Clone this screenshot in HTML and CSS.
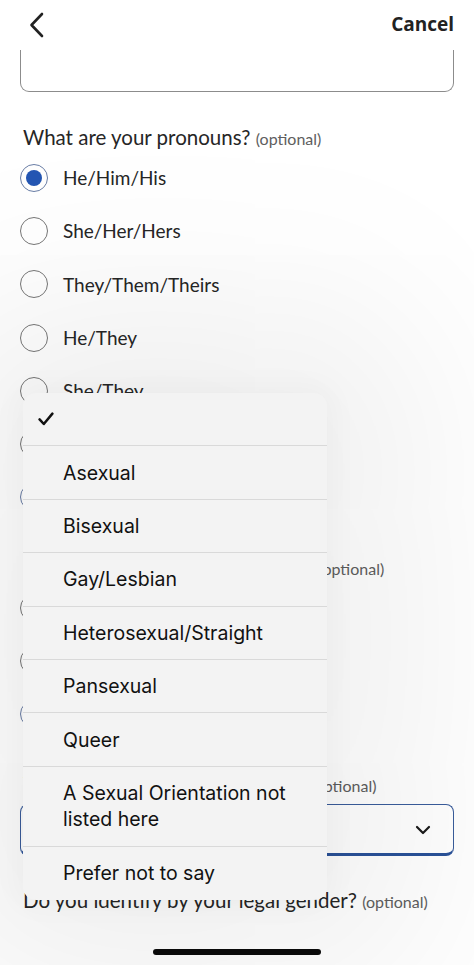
FILE: index.html
```html
<!DOCTYPE html>
<html>
<head>
<meta charset="utf-8">
<link rel="stylesheet" href="styles.css">
</head>
<body>
<div class="screen">
  <header class="topbar">
    <svg class="back" width="16" height="26" viewBox="0 0 16 26"><path d="M13 2 L2.5 13 L13 24" fill="none" stroke="#222" stroke-width="2.6" stroke-linecap="round" stroke-linejoin="round"/></svg>
    <span class="cancel">Cancel</span>
  </header>
  <main class="content">
    <div class="textbox"></div>

    <p class="question q1">What are your pronouns? <span class="opt">(optional)</span></p>
    <ul class="radios">
      <li class="radio checked"><span class="circle"></span>He/Him/His</li>
      <li class="radio"><span class="circle"></span>She/Her/Hers</li>
      <li class="radio"><span class="circle"></span>They/Them/Theirs</li>
      <li class="radio"><span class="circle"></span>He/They</li>
      <li class="radio"><span class="circle"></span>She/They</li>
      <li class="radio"><span class="circle"></span></li>
      <li class="radio checked"><span class="circle"></span></li>
    </ul>

    <p class="question q2">Do you identify as transgender?&nbsp; <span class="opt">(optional)</span></p>
    <ul class="radios">
      <li class="radio"><span class="circle"></span></li>
      <li class="radio"><span class="circle"></span></li>
      <li class="radio checked"><span class="circle"></span></li>
    </ul>

    <p class="question q3">What's your sexual orientation? <span class="opt">(optional)</span></p>
    <div class="select">
      <svg class="chev" width="16" height="10" viewBox="0 0 16 10"><path d="M2 2 L8 8 L14 2" fill="none" stroke="#1b1b1b" stroke-width="2.2" stroke-linecap="round" stroke-linejoin="round"/></svg>
    </div>

    <p class="question q4">Do you identify by your legal gender? <span class="opt">(optional)</span></p>
  </main>

  <div class="menu">
    <div class="item check-row">
      <svg width="16" height="14" viewBox="0 0 16 14"><path d="M1.6 7.4 L5.8 12 L14.4 1.6" fill="none" stroke="#111" stroke-width="2.5" stroke-linecap="round" stroke-linejoin="round"/></svg>
    </div>
    <div class="item">Asexual</div>
    <div class="item">Bisexual</div>
    <div class="item">Gay/Lesbian</div>
    <div class="item">Heterosexual/Straight</div>
    <div class="item">Pansexual</div>
    <div class="item">Queer</div>
    <div class="item two">A Sexual Orientation not listed here</div>
    <div class="item last">Prefer not to say</div>
  </div>

  <div class="home"></div>
</div>
</body>
</html>
```

FILE: styles.css
```css
* { box-sizing: border-box; }
html, body { margin: 0; padding: 0; background: #fff; }
.screen {
  position: relative;
  width: 474px;
  height: 965px;
  overflow: hidden;
  background: #fff;
  font-family: "Lato", "Noto Sans", sans-serif;
  color: #262626;
}
.topbar {
  height: 48px;
  display: flex;
  align-items: center;
  justify-content: space-between;
  padding: 0 20px 0 29px;
}
.back { display: block; margin-top: 2px; }
.cancel {
  font-family: "Open Sans", sans-serif;
  font-weight: 700;
  font-size: 19px;
  color: #222;
}
.content { padding: 0 20px; }
.textbox {
  height: 42px;
  margin-top: 2px;
  border: 1.5px solid #8c8c8c;
  border-top: none;
  border-radius: 0 0 9px 9px;
}
.question {
  margin: 0;
  font-size: 20.5px;
  line-height: 24px;
  padding-left: 3px;
  color: #262626;
}
.q1 { margin-top: 33px; }
.opt { font-size: 16px; color: #5e5e5e; }
.radios {
  list-style: none;
  margin: 0;
  padding: 0;
}
.radio {
  height: 53.3px;
  display: flex;
  align-items: center;
  gap: 15px;
  font-size: 19px;
  color: #262626;
}
.circle {
  width: 28px;
  height: 28px;
  border-radius: 50%;
  border: 1.5px solid #777;
  flex: none;
  display: flex;
  align-items: center;
  justify-content: center;
}
.radio.checked .circle::after {
  content: "";
  width: 16px;
  height: 16px;
  border-radius: 50%;
  background: #2456b3;
}
.radio.checked .circle { border-color: #6a7ea6; }
.q2 { margin-top: 31px; }
.q3 { margin-top: 31px; }
.select {
  height: 52px;
  margin-top: 6px;
  border: 1.5px solid #3a5d9c;
  border-bottom: 3.5px solid #2a5299;
  border-radius: 8px;
  display: flex;
  align-items: center;
  justify-content: flex-end;
  padding-right: 22px;
}
.chev { display: block; margin-top: 2px; }
.q4 { margin-top: 32px; }

.menu {
  position: absolute;
  left: 23px;
  top: 393px;
  width: 304px;
  background: #f3f3f3;
  border-radius: 13px;
  overflow: hidden;
  box-shadow: 0 0 200px 90px rgba(0, 0, 0, 0.065), 0 0 30px 6px rgba(0, 0, 0, 0.03);
  font-family: "Inter", "Liberation Sans", sans-serif;
  font-size: 19.5px;
  color: #111;
}
.item {
  height: 53.4px;
  display: flex;
  align-items: center;
  padding-left: 40px;
  border-bottom: 1px solid #d9d9d9;
  line-height: 26px;
}
.item.check-row { padding-left: 15px; }
.item.two { height: 80px; padding-right: 20px; }
.item.last { border-bottom: none; height: 53px; }
.home {
  position: absolute;
  left: 153px;
  top: 949px;
  width: 168px;
  height: 6px;
  border-radius: 3px;
  background: #0a0a0a;
}
```
